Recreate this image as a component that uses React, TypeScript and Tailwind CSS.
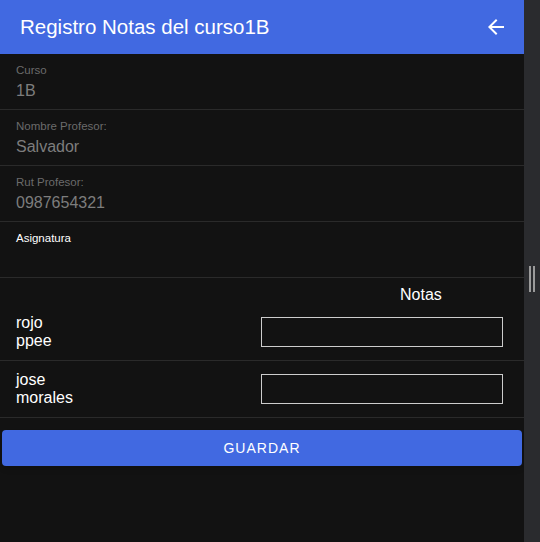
import { useState } from "react";

interface Alumno {
    nombre: string;
    apellido: string;
}

const alumnos: Alumno[] = [
    { nombre: "rojo", apellido: "ppee" },
    { nombre: "jose", apellido: "morales" }
];

const info = [
    { label: "Curso", value: "1B" },
    { label: "Nombre Profesor:", value: "Salvador" },
    { label: "Rut Profesor:", value: "0987654321" }
];

const App = () => {
    const [notas, setNotas] = useState<string[]>(["", ""]);

    return (
        <div
            className="flex h-[542px] w-[540px] bg-[#121212] text-white"
            style={{ fontFamily: '"Liberation Sans", Arial, sans-serif' }}
        >
            <div className="flex w-[524px] flex-col">
                <div className="flex h-[54px] items-center justify-between bg-[#4169e1] pl-5 pr-4">
                    <span className="text-[20.5px] leading-6">Registro Notas del curso1B</span>
                    <svg width="24" height="24" viewBox="0 0 24 24" fill="white">
                        <path d="M20 11H7.83l5.59-5.59L12 4l-8 8 8 8 1.41-1.41L7.83 13H20v-2z" />
                    </svg>
                </div>

                {info.map((item) => (
                    <div key={item.label} className="h-[56px] border-b border-[#2a2a2a] px-4 pt-[8px]">
                        <div className="text-[11.5px] leading-4 text-[#6b6b6b]">{item.label}</div>
                        <div className="mt-[3px] text-[16px] leading-5 text-[#7d7d7d]">{item.value}</div>
                    </div>
                ))}

                <div className="h-[56px] border-b border-[#2a2a2a] px-4 pt-[8px]">
                    <div className="text-[11.5px] leading-4">Asignatura</div>
                </div>

                <div className="h-[26px] pl-[400px] pt-[7px] text-[16px] leading-5">Notas</div>

                {alumnos.map((a, i) => (
                    <div
                        key={a.nombre}
                        className="flex h-[57px] items-center justify-between border-b border-[#2a2a2a] pl-4 pr-[21px]"
                    >
                        <div className="text-[16px] leading-[18px]">
                            <div>{a.nombre}</div>
                            <div>{a.apellido}</div>
                        </div>
                        <input
                            value={notas[i]}
                            onChange={(e) => {
                                const copy = [...notas];
                                copy[i] = e.target.value;
                                setNotas(copy);
                            }}
                            className="h-[30px] w-[242px] border border-[#cccccc] bg-transparent px-2 text-white outline-none"
                        />
                    </div>
                ))}

                <button className="mx-[2px] mt-[12px] h-[36px] rounded-[4px] bg-[#4169e1] text-[14px] uppercase tracking-[1px] text-white shadow-md">
                    Guardar
                </button>
            </div>

            <div className="flex w-4 items-start justify-center bg-[#2a2b2e] pt-[266px]">
                <div className="flex gap-[2px]">
                    <div className="h-[26px] w-[2px] bg-[#9a9a9a]" />
                    <div className="h-[26px] w-[2px] bg-[#9a9a9a]" />
                </div>
            </div>
        </div>
    );
};

export default App;
